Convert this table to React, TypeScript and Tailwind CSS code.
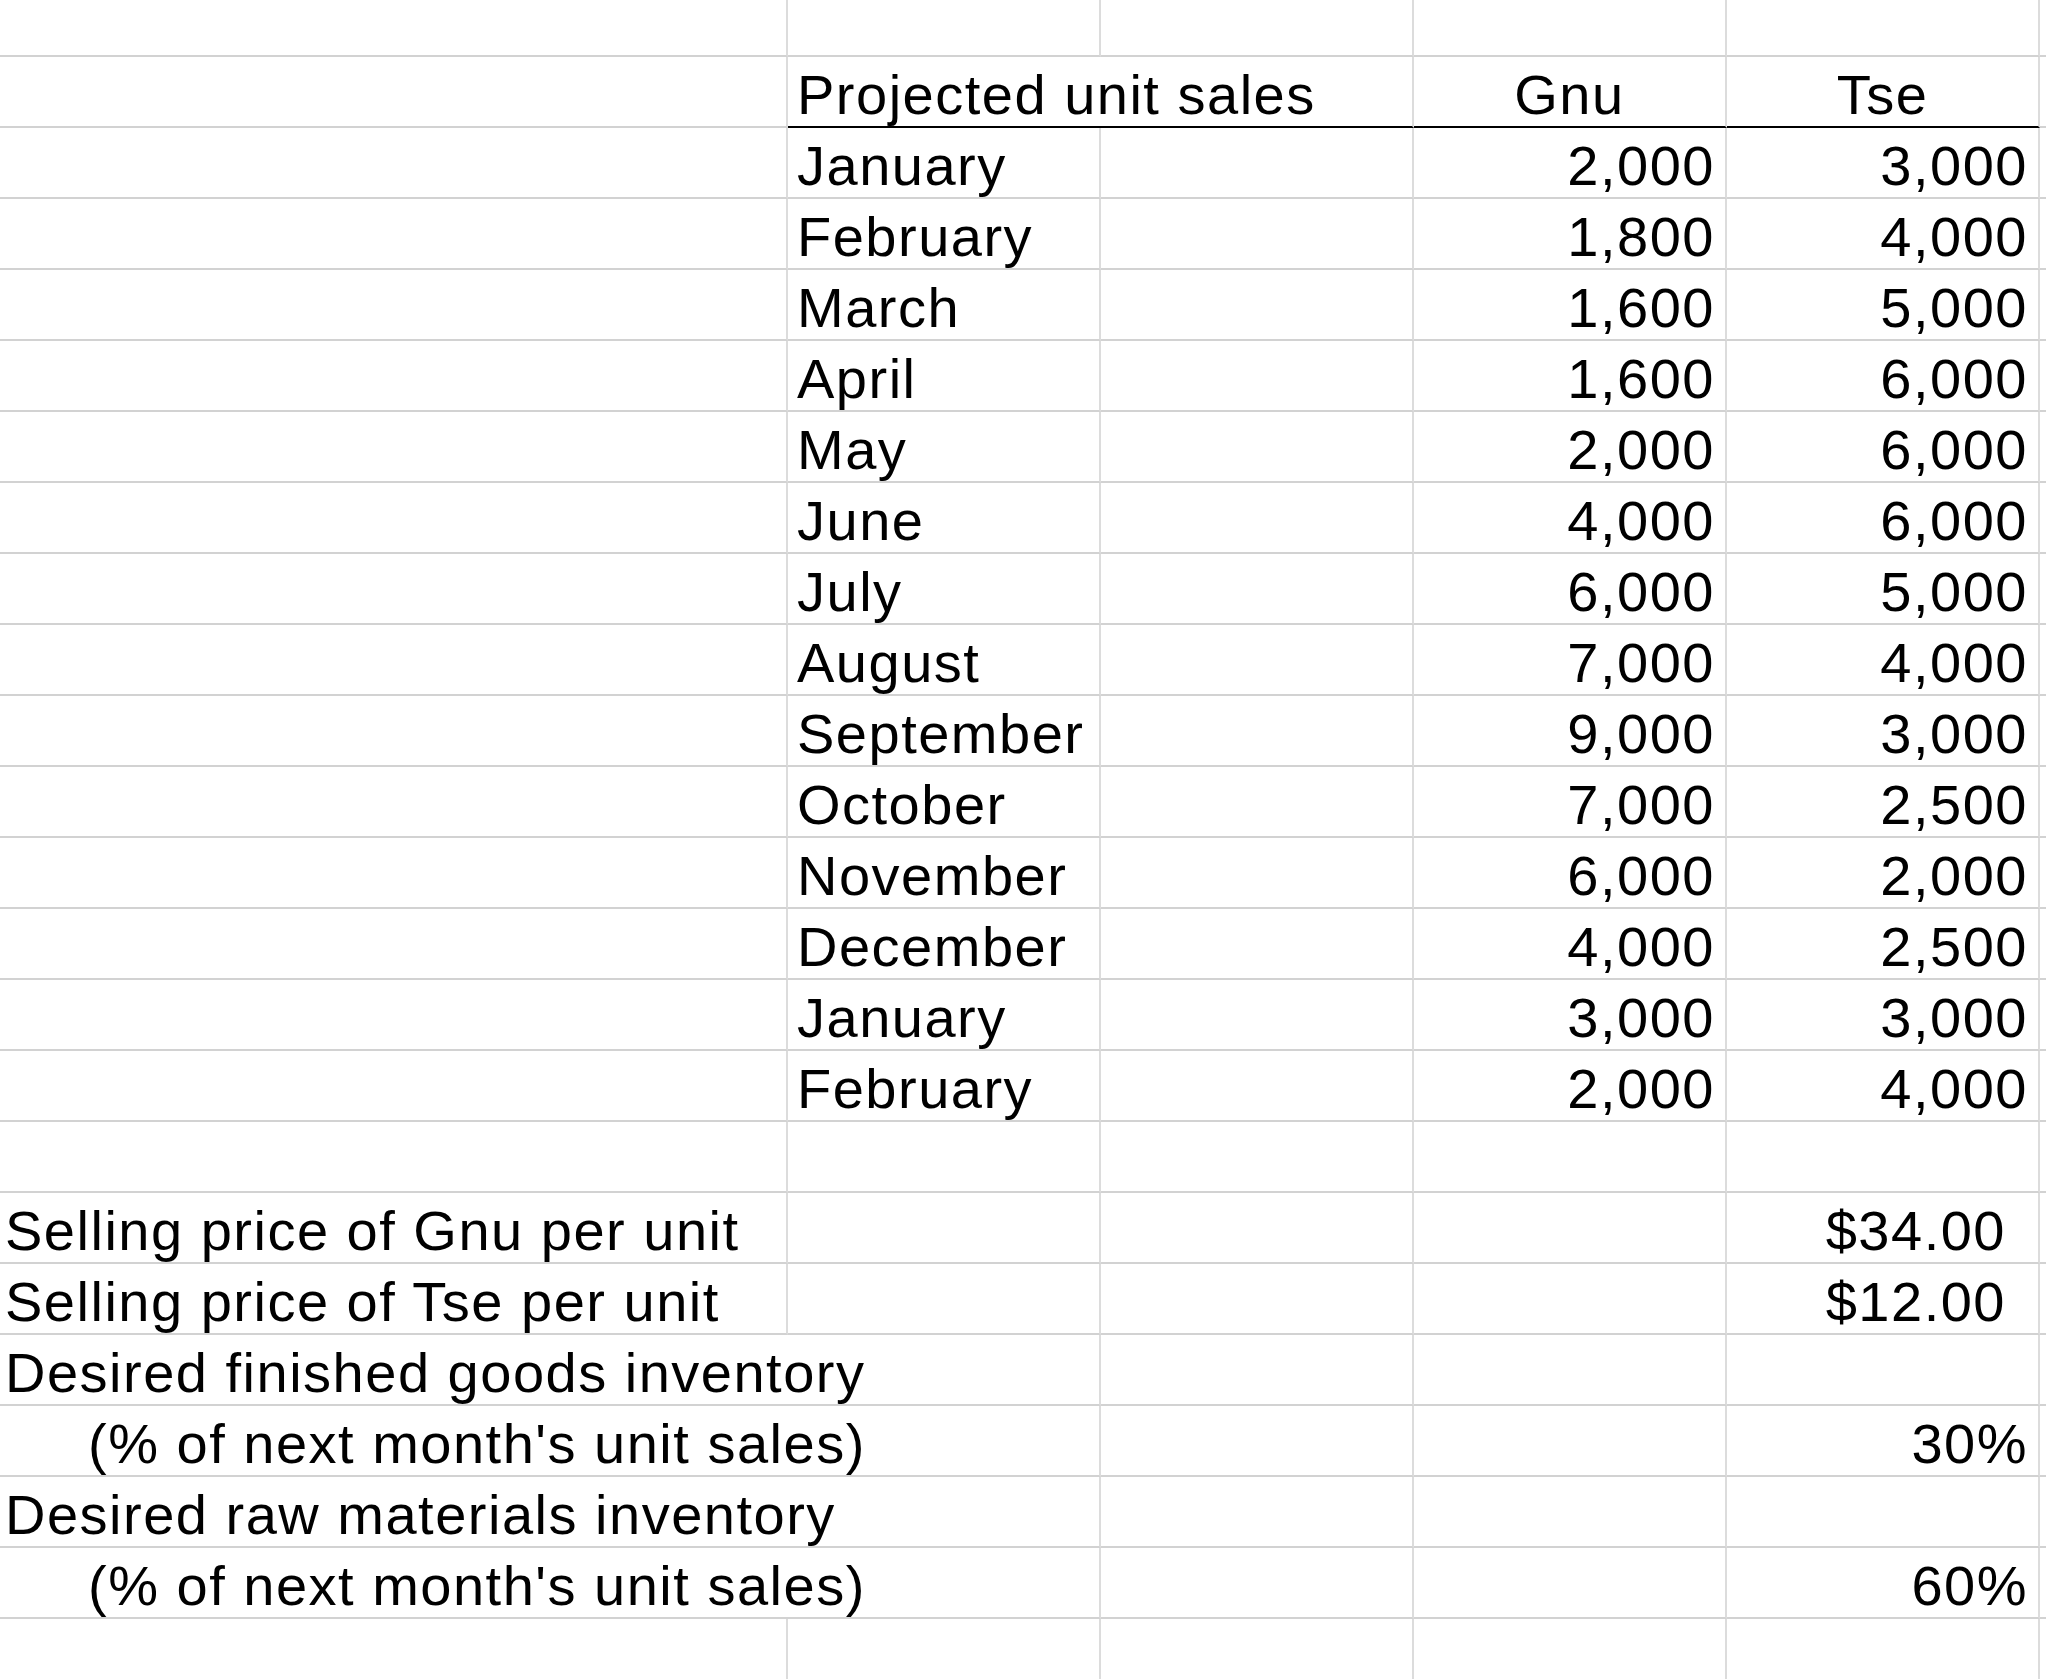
import clsx from 'clsx'
import type { ReactNode } from 'react'

type CellProps = {
  w: string
  children?: ReactNode
  align?: 'left' | 'center' | 'right'
  pad?: string
  bottom?: 'grid' | 'black' | 'none'
  right?: boolean
}

function Cell({ w, children, align = 'left', pad = '', bottom = 'grid', right = true }: CellProps) {
  return (
    <div
      className={clsx(
        'flex h-full shrink-0 items-end whitespace-nowrap pb-[3px]',
        w,
        pad,
        right && 'border-r-2 border-r-[#dcdcdc]',
        bottom === 'grid' && 'border-b-2 border-b-[#d2d2d2]',
        bottom === 'black' && 'border-b-2 border-b-black',
        align === 'center' && 'justify-center',
        align === 'right' && 'justify-end',
      )}
    >
      {children}
    </div>
  )
}

function Filler({ bottom = true }: { bottom?: boolean }) {
  return <div className={clsx('h-full flex-1', bottom && 'border-b-2 border-b-[#d2d2d2]')} />
}

const months: [string, string, string][] = [
  ['January', '2,000', '3,000'],
  ['February', '1,800', '4,000'],
  ['March', '1,600', '5,000'],
  ['April', '1,600', '6,000'],
  ['May', '2,000', '6,000'],
  ['June', '4,000', '6,000'],
  ['July', '6,000', '5,000'],
  ['August', '7,000', '4,000'],
  ['September', '9,000', '3,000'],
  ['October', '7,000', '2,500'],
  ['November', '6,000', '2,000'],
  ['December', '4,000', '2,500'],
  ['January', '3,000', '3,000'],
  ['February', '2,000', '4,000'],
]

function EmptyRow({ h = 'h-[71px]', bottom = true }: { h?: string; bottom?: boolean }) {
  const b = bottom ? 'grid' : 'none'
  return (
    <div className={clsx('flex', h)}>
      <Cell w="w-[788px]" bottom={b} />
      <Cell w="w-[313px]" bottom={b} />
      <Cell w="w-[313px]" bottom={b} />
      <Cell w="w-[313px]" bottom={b} />
      <Cell w="w-[313px]" bottom={b} />
      <Filler bottom={bottom} />
    </div>
  )
}

function PriceRow({ label, value }: { label: string; value: string }) {
  return (
    <div className="flex h-[71px]">
      <Cell w="w-[788px]" pad="pl-[5px]">{label}</Cell>
      <Cell w="w-[313px]" />
      <Cell w="w-[313px]" />
      <Cell w="w-[313px]" />
      <Cell w="w-[313px]" align="right" pad="pr-[32px]">{value}</Cell>
      <Filler />
    </div>
  )
}

// label runs over the A|B gridline, so A and B are one cell here
function WideRow({ label, value, indent }: { label: string; value?: string; indent?: boolean }) {
  return (
    <div className="flex h-[71px]">
      <Cell w="w-[1101px]" pad={indent ? 'pl-[88px]' : 'pl-[5px]'}>{label}</Cell>
      <Cell w="w-[313px]" />
      <Cell w="w-[313px]" />
      <Cell w="w-[313px]" align="right" pad="pr-[10px]">{value}</Cell>
      <Filler />
    </div>
  )
}

export default function App() {
  return (
    <div className="h-[1679px] w-[2046px] overflow-hidden bg-white font-['Liberation_Sans',Arial,sans-serif] text-[56px] leading-[56px] tracking-[1.5px] text-black">
      <EmptyRow h="h-[57px]" />

      <div className="flex h-[71px]">
        <Cell w="w-[788px]" />
        <Cell w="w-[626px]" pad="pl-[9px]" bottom="black">Projected unit sales</Cell>
        <Cell w="w-[313px]" align="center" bottom="black">Gnu</Cell>
        <Cell w="w-[313px]" align="center" bottom="black">Tse</Cell>
        <Filler />
      </div>

      {months.map(([m, gnu, tse], i) => (
        <div key={i} className="flex h-[71px]">
          <Cell w="w-[788px]" />
          <Cell w="w-[313px]" pad="pl-[9px]">{m}</Cell>
          <Cell w="w-[313px]" />
          <Cell w="w-[313px]" align="right" pad="pr-[10px]">{gnu}</Cell>
          <Cell w="w-[313px]" align="right" pad="pr-[10px]">{tse}</Cell>
          <Filler />
        </div>
      ))}

      <EmptyRow />

      <PriceRow label="Selling price of Gnu per unit" value="$34.00" />
      <PriceRow label="Selling price of Tse per unit" value="$12.00" />
      <WideRow label="Desired finished goods inventory" />
      <WideRow label="(% of next month's unit sales)" value="30%" indent />
      <WideRow label="Desired raw materials inventory" />
      <WideRow label="(% of next month's unit sales)" value="60%" indent />

      <EmptyRow h="h-[60px]" bottom={false} />
    </div>
  )
}
